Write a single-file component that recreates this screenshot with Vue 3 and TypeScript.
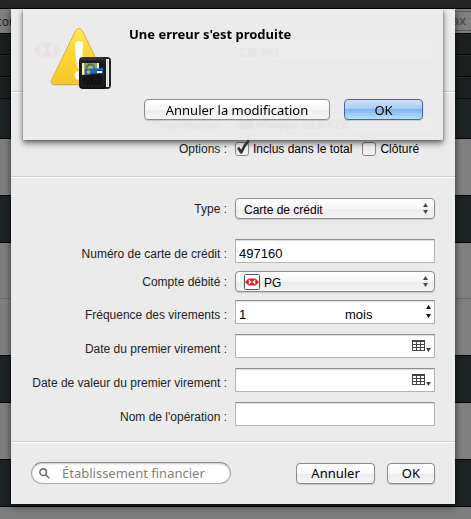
<script setup lang="ts">
import { ref } from 'vue'

type BandKind = 'head' | 'dark' | 'grey'
interface Band { kind: BandKind; height: number }

const bands: Band[] = [
  { kind: 'head', height: 21 },
  { kind: 'head', height: 22 },
  { kind: 'head', height: 22 },
  { kind: 'dark', height: 40 },
  { kind: 'grey', height: 57 },
  { kind: 'dark', height: 47 },
  { kind: 'grey', height: 56 },
  { kind: 'grey', height: 57 },
  { kind: 'dark', height: 47 },
  { kind: 'grey', height: 57 },
  { kind: 'dark', height: 47 },
]

const name = ref('CB PG')
const owner = ref('Philippe GLEYZE')
const included = ref(true)
const closed = ref(false)
const kind = ref('Carte de crédit')
const cardNumber = ref('497160')
const account = ref('PG')
const every = ref('1')
const unit = ref('mois')
const firstDate = ref('')
const valueDate = ref('')
const operation = ref('')
const bank = ref('')
</script>

<template>
  <div class="desktop">
    <div class="backdrop">
      <div class="titlebar"></div>
      <div class="toolbar"><span class="tool-left">cou</span><span class="tool-right">Max</span></div>
      <div v-for="(b, i) in bands" :key="i" class="band" :class="b.kind" :style="{ height: b.height + 'px' }"></div>
      <div class="band rest"></div>
    </div>

    <main class="sheet">
      <form @submit.prevent>
        <section class="identity">
          <svg class="bank-logo" viewBox="0 0 26 14" aria-hidden="true">
            <path d="M6 0H20L26 7L20 14H6L0 7Z" fill="#e8212b" />
            <path d="M6 0V14L13 7ZM20 0V14L13 7Z" fill="#fff" />
          </svg>
          <input v-model="name" class="field" type="text" aria-label="Nom" />
        </section>

        <section class="grid options">
          <label for="owner" class="owner-label">Propriétaires :</label>
          <div class="popup">
            <span class="swatch"></span>
            <select id="owner" v-model="owner" class="with-icon"><option>Philippe GLEYZE</option></select>
          </div>
          <span class="label">Options :</span>
          <div class="checks">
            <label class="check">
              <input v-model="included" type="checkbox" />
              <svg v-if="included" viewBox="0 0 14 16" aria-hidden="true"><path d="M3.200 6.500L6.200 11.500Q9 4.500 13.800 -.5" /></svg>
              <span>Inclus dans le total</span>
            </label>
            <label class="check">
              <input v-model="closed" type="checkbox" />
              <span>Clôturé</span>
            </label>
          </div>
        </section>

        <section class="grid details">
          <label for="kind" class="spaced">Type :</label>
          <div class="popup spaced">
            <select id="kind" v-model="kind"><option>Carte de crédit</option></select>
            <svg class="arrows" viewBox="0 0 5 11" aria-hidden="true"><path d="M0 4L2.500 0L5 4ZM0 7H5L2.500 11Z" /></svg>
          </div>

          <label for="card" class="low">Numéro de carte de crédit :</label>
          <input id="card" v-model="cardNumber" class="field" type="text" />

          <label for="account">Compte débité :</label>
          <div class="popup">
            <svg class="mini-logo" viewBox="0 0 16 16" aria-hidden="true">
              <rect x=".5" y=".5" width="15" height="15" rx="1" fill="#fff" stroke="#555" />
              <path d="M4.500 4.500H11.500L15 8L11.500 11.500H4.500L1 8Z" fill="#f01822" />
              <path d="M4.800 5.200V10.800L7.600 8ZM11.200 5.200V10.800L8.400 8Z" fill="#fff" />
            </svg>
            <select id="account" v-model="account" class="with-icon"><option>PG</option></select>
            <svg class="arrows" viewBox="0 0 5 11" aria-hidden="true"><path d="M0 4L2.500 0L5 4ZM0 7H5L2.500 11Z" /></svg>
          </div>

          <label for="every" class="low">Fréquence des virements :</label>
          <div class="field combo">
            <input id="every" v-model="every" type="text" />
            <select v-model="unit" aria-label="Unité"><option>mois</option></select>
            <svg class="stepper" viewBox="0 0 5 13" aria-hidden="true"><path d="M0 4L2.500 0L5 4ZM0 9H5L2.500 13Z" /></svg>
          </div>

          <label for="first" class="low late">Date du premier virement :</label>
          <div class="field combo date late">
            <input id="first" v-model="firstDate" type="text" />
            <button type="button" class="picker" aria-label="Calendrier">
              <svg viewBox="0 0 19 12" aria-hidden="true">
                <rect width="13" height="11" fill="#444" />
                <path d="M1 2h3v2h-3zM5 2h3v2h-3zM9 2h3v2h-3zM1 5h3v2h-3zM5 5h3v2h-3zM9 5h3v2h-3zM1 8h3v2h-3zM5 8h3v2h-3zM9 8h3v2h-3z" fill="#fff" />
                <path d="M14 8H19L16.500 12Z" fill="#444" />
              </svg>
            </button>
          </div>

          <label for="value" class="low late">Date de valeur du premier virement :</label>
          <div class="field combo date late">
            <input id="value" v-model="valueDate" type="text" />
            <button type="button" class="picker" aria-label="Calendrier">
              <svg viewBox="0 0 19 12" aria-hidden="true">
                <rect width="13" height="11" fill="#444" />
                <path d="M1 2h3v2h-3zM5 2h3v2h-3zM9 2h3v2h-3zM1 5h3v2h-3zM5 5h3v2h-3zM9 5h3v2h-3zM1 8h3v2h-3zM5 8h3v2h-3zM9 8h3v2h-3z" fill="#fff" />
                <path d="M14 8H19L16.500 12Z" fill="#444" />
              </svg>
            </button>
          </div>

          <label for="operation" class="low late">Nom de l'opération :</label>
          <input id="operation" v-model="operation" class="field late" type="text" />
        </section>

        <footer>
          <div class="search">
            <svg viewBox="0 0 11 11" aria-hidden="true"><circle cx="4.200" cy="4.200" r="3.300" /><path d="M6.700 6.700L10.300 10.300" /></svg>
            <input v-model="bank" type="search" placeholder="Établissement financier" aria-label="Établissement financier" />
          </div>
          <div class="actions">
            <button type="button" class="btn">Annuler</button>
            <button type="submit" class="btn">OK</button>
          </div>
        </footer>
      </form>

      <div class="alert" role="alertdialog" aria-labelledby="alert-title">
        <svg class="alert-icon" viewBox="0 0 64 64" aria-hidden="true">
          <defs>
            <linearGradient id="warn" x1="0" y1="0" x2="0" y2="1">
              <stop offset="0" stop-color="#ffe650" />
              <stop offset=".5" stop-color="#fdd531" />
              <stop offset="1" stop-color="#f9c52c" />
            </linearGradient>
            <linearGradient id="hide" x1="0" y1="0" x2="0" y2="1">
              <stop offset="0" stop-color="#30353a" />
              <stop offset=".2" stop-color="#15181b" />
              <stop offset="1" stop-color="#0c0e10" />
            </linearGradient>
          </defs>
          <path d="M26.500 4.500Q30 -.5 33.500 4.500L57.500 53Q59 58 55 58.500H5Q1 58 2.500 53Z" fill="#a89045" opacity=".35" />
          <path d="M26.500 4Q30 -1.500 33.500 4L57.500 53Q59 57 55 57.500H5Q1 57 2.500 53Z" fill="url(#warn)" stroke="#c79c3a" stroke-width=".7" />
          <path d="M26 17Q26 14 30 14Q34 14 34 17Q34 29 31.700 40Q31 42 30 42Q29 42 28.300 40Q26 29 26 17Z" fill="#fff" />
          <circle cx="29.700" cy="48.500" r="4.200" fill="#fff" />
          <rect x="32" y="30" width="30" height="32" rx="4" fill="#202428" />
          <rect x="57" y="32" width="3" height="28" fill="#f3f4f4" />
          <rect x="58" y="32" width="1" height="28" fill="#c4c8ca" />
          <rect x="30" y="30" width="27" height="32" rx="4" fill="url(#hide)" />
          <rect x="32" y="32" width="23" height="28" rx="3" fill="none" stroke="#4b4f53" stroke-width=".5" stroke-dasharray="2 1.500" />
          <rect x="33" y="36" width="17" height="12" fill="#eef2cd" />
          <rect x="35" y="36" width="13" height="12" fill="#8ba36d" />
          <circle cx="41.500" cy="41" r="4.600" fill="#4d7146" />
          <circle cx="41.500" cy="41.500" r="3" fill="#9bb37c" />
          <path d="M36 42L54 41V48H36Z" fill="#1f68bf" />
          <circle cx="39.500" cy="45" r="1.700" fill="#f5a72b" />
          <rect x="48" y="43" width="5" height="1" fill="#173b7c" />
          <rect x="48" y="44" width="5" height="2" fill="#fff" />
          <rect x="48" y="46" width="5" height="1" fill="#d84242" />
          <path d="M33 48L41 48Q43 46 46 47L54 46.500V57Q54 59 51 59H36Q33 59 33 57Z" fill="#121416" stroke="#2c3033" stroke-width=".5" />
        </svg>
        <h1 id="alert-title">Une erreur s'est produite</h1>
        <div class="alert-actions">
          <button type="button" class="btn wide">Annuler la modification</button>
          <button type="button" class="btn primary">OK</button>
        </div>
      </div>
    </main>
  </div>
</template>

<style>
body { margin: 0; background: #808080; }
</style>

<style scoped>
* { box-sizing: border-box; }
.desktop { display: grid; min-height: 100vh; overflow: hidden; font-family: "Liberation Sans", Arial, sans-serif; font-size: 12px; color: #222; }
.backdrop, .sheet { grid-area: 1 / 1; min-width: 0; }
.backdrop { display: flex; flex-direction: column; overflow: hidden; }
.titlebar { height: 9px; background: #252525; border-bottom: 1px solid #000; }
.toolbar { display: flex; justify-content: space-between; align-items: center; height: 25px; border-bottom: 1px solid #000; background: #7f7f7f; font-family: "Noto Sans", sans-serif; font-size: 12px; color: #222; overflow: hidden; }
.tool-left { margin-left: -4px; }
.tool-right { height: 20px; padding: 0 5px; border: 1px solid #5c5c5c; border-right: 0; border-left: 0; line-height: 18px; font-weight: 600; color: #4b4b4b; }
.band { border-bottom: 1px solid #000; }
.head { background: #1b1f20; border-bottom-color: #0a0c0c; border-top: 1px solid #262a2b; }
.dark { background: #1d2224; }
.grey { background: #808080; }
.grey:has(+ .grey) { border-bottom-color: #6a6a6a; }
.rest { flex: 1; background: #7e7e7e; border: 0; }

.sheet { position: relative; align-self: start; margin: 9px 16px 15px 11px; background: #ebebeb; box-shadow: 0 2px 7px rgba(0, 0, 0, .65); }
section { border-bottom: 1px solid #cecece; box-shadow: 0 1px #fff; margin-bottom: 1px; }

.identity { display: flex; align-items: center; gap: 175px; padding: 29px 20px 29px 23px; }
.bank-logo { flex: none; width: 26px; height: 14px; }
.identity .field { flex: 1; min-width: 0; }

.grid { display: grid; grid-template-columns: minmax(0, 216px) minmax(0, 1fr); column-gap: 8px; align-items: center; padding-right: 20px; }
.grid > label, .label { text-align: right; line-height: 16px; white-space: nowrap; }
.grid > .low { padding-top: 6px; }
.grid > .owner-label { padding-top: 3px; line-height: 12px; }
.options { row-gap: 7px; padding-top: 20px; padding-bottom: 19px; }
.details { row-gap: 8px; padding-top: 20px; padding-bottom: 15px; }
.grid > .spaced { margin-bottom: 12px; }
.grid > .late { margin-top: 2px; }

.field { width: 100%; height: 24px; padding: 4px 3px 0; border: 1px solid #b4b4b4; border-top-color: #8f8f8f; border-radius: 0; background: #fff; box-shadow: inset 0 1px 1px #ddd; font: 13px "Liberation Sans", Arial, sans-serif; color: #000; outline: none; }
.combo { display: grid; grid-template-columns: 106px 1fr; align-items: center; }
.combo input, .combo select { width: 100%; min-width: 0; padding: 0; border: 0; background: none; font: inherit; color: inherit; outline: none; appearance: none; }
.combo select { grid-area: 1 / 2; }
.stepper { grid-area: 1 / 2; justify-self: end; width: 5px; height: 13px; margin: 0 0 5px; fill: #111; pointer-events: none; }
.combo.date { grid-template-columns: 1fr auto; }
.picker { display: block; padding: 0 0 4px; border: 0; background: none; }
.picker svg { display: block; width: 19px; height: 12px; }

.popup { display: grid; align-items: center; height: 21px; border: 1px solid #8c8c8c; border-radius: 4px; background: linear-gradient(#fff, #f6f6f6 50%, #ebebeb 51%, #f5f5f5); box-shadow: 0 1px 1px rgba(0, 0, 0, .15); }
.popup > * { grid-area: 1 / 1; }
.popup select { width: 100%; height: 19px; padding: 2px 20px 0 8px; border: 0; background: none; font: 12px "Liberation Sans", Arial, sans-serif; color: #000; appearance: none; outline: none; }
.popup .with-icon { padding-left: 28px; }
.popup #owner { padding-left: 20px; }
.arrows { justify-self: end; width: 5px; height: 11px; margin-right: 6px; fill: #4a4a4a; pointer-events: none; }
.mini-logo { width: 16px; height: 16px; margin-left: 8px; }
.swatch { width: 15px; height: 13px; margin-left: 3px; background: #8a7a68; }

.checks { display: flex; gap: 10px; }
.check { display: grid; grid-template-columns: 14px auto; column-gap: 4px; align-items: center; height: 16px; line-height: 16px; color: #000; white-space: nowrap; }
.check input { grid-area: 1 / 1; width: 14px; height: 14px; margin: 0; appearance: none; border: 1px solid #858585; border-radius: 3px; background: linear-gradient(#fff, #f0f0f0 50%, #e8e8e8 51%, #fafafa); }
.check svg { grid-area: 1 / 1; width: 14px; height: 16px; overflow: visible; z-index: 1; pointer-events: none; fill: none; stroke: #333; stroke-width: 2.600; stroke-linejoin: round; }
.check span { grid-area: 1 / 2; }

footer { display: flex; align-items: center; justify-content: space-between; padding: 19px 20px 20px; }
.search { display: flex; align-items: center; gap: 12px; width: 200px; height: 22px; padding: 0 7px; border: 1px solid #aaa; border-top-color: #8a8a8a; border-radius: 11px; background: #fff; box-shadow: inset 0 1px 2px #ccc; }
.search svg { flex: none; width: 11px; height: 11px; fill: none; stroke: #707070; stroke-width: 1.600; }
.search input { flex: 1; min-width: 0; padding: 0; border: 0; background: none; font: 13px "Noto Sans", sans-serif; appearance: none; outline: none; }
.search input::placeholder { color: #808080; opacity: 1; }
.actions { display: flex; gap: 12px; }
.btn { height: 21px; padding: 0 14px; border: 1px solid #8a8a8a; border-radius: 4px; background: linear-gradient(#fff, #f8f8f8 50%, #ececec 51%, #f6f6f6); box-shadow: 0 1px 1px rgba(0, 0, 0, .15); font: 13px/18px "Noto Sans", sans-serif; color: #000; white-space: nowrap; }

.alert { position: absolute; top: 0; left: 12px; right: 12px; display: grid; grid-template-columns: 64px 1fr; column-gap: 16px; padding: 18px 20px 20px 26px; background: rgba(235, 235, 235, .94); backdrop-filter: blur(1px); box-shadow: 0 3px 6px rgba(0, 0, 0, .6), 0 0 1px rgba(0, 0, 0, .6); clip-path: inset(0 -12px -12px -12px); }
.alert-icon { width: 64px; height: 64px; }
h1 { margin: 0; font: bold 13px/14px "Noto Sans", sans-serif; color: #000; }
.alert-actions { grid-column: 1 / 3; display: flex; justify-content: flex-end; gap: 14px; margin-top: 8px; }
.alert-actions .btn { min-width: 79px; }
.alert-actions .wide { min-width: 186px; }
.alert-actions .primary { border-color: #4f5f9e; background: linear-gradient(#cfe2f8, #a3cbf5 49%, #7db5f0 50%, #b9e2fb); }
</style>
